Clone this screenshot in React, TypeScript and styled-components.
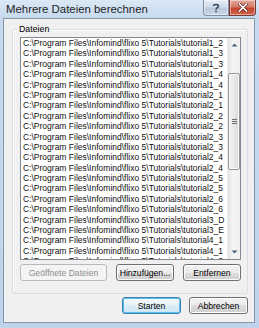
import React from "react";
import styled, { createGlobalStyle } from "styled-components";

const Global = createGlobalStyle`
  html, body { margin: 0; padding: 0; background: #c4d8ee; }
  * { box-sizing: border-box; }
`;

const Frame = styled.div`
  width: 259px;
  height: 328px;
  display: flex;
  flex-direction: column;
  background: linear-gradient(180deg, #dbe8f5 0px, #c6d9ee 18px, #bfd4ec 100%);
  font-family: "Liberation Sans", Arial, sans-serif;
  overflow: hidden;
`;

const TitleBar = styled.div`
  height: 18px;
  display: flex;
  align-items: flex-start;
  padding-left: 6px;
  padding-right: 3px;
`;

const TitleText = styled.div`
  flex: 1;
  font-family: "Liberation Sans", Arial, sans-serif;
  font-size: 11.4px;
  line-height: 13px;
  padding-top: 3px;
  color: #1e1e1e;
`;

const CaptionButtons = styled.div`
  display: flex;
`;

const CaptionButton = styled.div<{ $close?: boolean }>`
  width: ${(p) => (p.$close ? 27 : 26)}px;
  height: 16px;
  display: flex;
  align-items: center;
  justify-content: center;
  border: 1px solid ${(p) => (p.$close ? "#7a3a34" : "#7e8ea3")};
  border-top: none;
  border-radius: ${(p) => (p.$close ? "0 0 4px 0" : "0 0 0 4px")};
  background: ${(p) =>
    p.$close
      ? "linear-gradient(180deg, #e4a99a 0%, #d47c68 45%, #c2452d 55%, #d0634b 100%)"
      : "linear-gradient(180deg, #e6eef7 0%, #d1dcea 45%, #b9c9dc 55%, #c9d7e7 100%)"};
  box-shadow: inset 0 0 0 1px rgba(255, 255, 255, 0.45);
`;

const Client = styled.div`
  flex: 1;
  margin: 0 4px 5px 3px;
  border: 1px solid #8596aa;
  background: #f0f0f0;
  display: flex;
  flex-direction: column;
`;

const GroupBox = styled.div`
  position: relative;
  margin: 10px 6px 0 8px;
  height: 265px;
  border: 1px solid #d5dfe5;
  border-radius: 3px;
  padding: 7px 6px 0 7px;
  display: flex;
  flex-direction: column;
  box-shadow: 1px 1px 0 #ffffff inset;
`;

const Legend = styled.div`
  position: absolute;
  top: -6px;
  left: 5px;
  padding: 0 1px;
  background: #f0f0f0;
  font-size: 8.8px;
  line-height: 10px;
  color: #000;
`;

const ListBox = styled.div`
  height: 223px;
  border: 1px solid #828790;
  background: #ffffff;
  display: flex;
  overflow: hidden;
`;

const Items = styled.div`
  flex: 1;
  min-width: 0;
  overflow: hidden;
  padding-left: 2px;
`;

const Item = styled.div`
  height: 10.4px;
  line-height: 10.4px;
  font-size: 8.5px;
  white-space: nowrap;
  color: #111;
`;

const ScrollBar = styled.div`
  width: 13px;
  flex: none;
  display: flex;
  flex-direction: column;
  background: linear-gradient(90deg, #e3e3e3 0%, #f5f5f5 40%, #f0f0f0 100%);
  border-left: 1px solid #ececec;
`;

const Arrow = styled.div`
  height: 13px;
  display: flex;
  align-items: center;
  justify-content: center;
`;

const Track = styled.div<{ $h: number }>`
  height: ${(p) => p.$h}px;
`;

const Thumb = styled.div`
  height: 97px;
  border: 1px solid #979797;
  border-radius: 2px;
  background: linear-gradient(90deg, #f3f3f3 0%, #e8e8e8 50%, #d9d9d9 100%);
  box-shadow: inset 0 0 0 1px #fafafa;
  display: flex;
  align-items: center;
  justify-content: center;
`;

const Grip = styled.div`
  width: 5px;
  height: 5px;
  background: repeating-linear-gradient(180deg, #6e6e6e 0 1px, transparent 1px 2px);
`;

const ButtonRow = styled.div<{ $end?: boolean }>`
  display: flex;
  gap: 9px;
  justify-content: ${(p) => (p.$end ? "flex-end" : "flex-start")};
`;

const GroupButtons = styled(ButtonRow)`
  margin-top: 4px;
`;

const BottomButtons = styled(ButtonRow)`
  margin: 3px 6px 0 0;
  gap: 8px;
`;

const Button = styled.div<{ $w: number; $disabled?: boolean; $default?: boolean }>`
  width: ${(p) => p.$w}px;
  height: 17px;
  display: flex;
  align-items: center;
  justify-content: center;
  font-size: 8.6px;
  border-radius: 3px;
  color: ${(p) => (p.$disabled ? "#8d8d8d" : "#000")};
  border: 1px solid
    ${(p) => (p.$disabled ? "#b7babc" : p.$default ? "#3c7fb1" : "#707070")};
  background: ${(p) =>
    p.$disabled
      ? "#f4f4f4"
      : p.$default
      ? "linear-gradient(180deg, #f2f8fc 0%, #eaf3fa 50%, #dbecf7 50%, #cfe6f5 100%)"
      : "linear-gradient(180deg, #f2f2f2 0%, #ebebeb 50%, #dddddd 50%, #cfcfcf 100%)"};
  box-shadow: ${(p) =>
    p.$default
      ? "inset 0 0 0 1px #5cc0ee"
      : p.$disabled
      ? "none"
      : "inset 0 0 0 1px #fcfcfc"};
`;

const files = [
  "1_2", "1_3", "1_3", "1_4", "1_4", "2_1", "2_1", "2_2", "2_2", "2_3", "2_3",
  "2_4", "2_4", "2_5", "2_5", "2_6", "2_6", "3_D", "3_E", "4_1", "4_1", "4_2",
];

const HelpGlyph = () => (
  <svg width="8" height="10" viewBox="0 0 8 10">
    <path d="M1.5 3 C1.5 1 6.5 1 6.5 3 C6.5 4.6 4 4.6 4 6.5" fill="none" stroke="#3d4a5c" strokeWidth="1.6" />
    <rect x="3.2" y="7.6" width="1.6" height="1.6" fill="#3d4a5c" />
  </svg>
);

const CloseGlyph = () => (
  <svg width="10" height="9" viewBox="0 0 10 9">
    <path d="M1.5 1 L8.5 8 M8.5 1 L1.5 8" stroke="#5a1c14" strokeWidth="3" strokeLinecap="square" />
    <path d="M1.5 1 L8.5 8 M8.5 1 L1.5 8" stroke="#ffffff" strokeWidth="1.7" strokeLinecap="square" />
  </svg>
);

const UpArrow = () => (
  <svg width="7" height="4" viewBox="0 0 7 4">
    <path d="M0.5 3.5 L3.5 0.5 L6.5 3.5 Z" fill="#4d6185" />
  </svg>
);

const DownArrow = () => (
  <svg width="7" height="4" viewBox="0 0 7 4">
    <path d="M0.5 0.5 L3.5 3.5 L6.5 0.5 Z" fill="#4d6185" />
  </svg>
);

export default function App() {
  return (
    <>
      <Global />
      <Frame>
        <TitleBar>
          <TitleText>Mehrere Dateien berechnen</TitleText>
          <CaptionButtons>
            <CaptionButton>
              <HelpGlyph />
            </CaptionButton>
            <CaptionButton $close>
              <CloseGlyph />
            </CaptionButton>
          </CaptionButtons>
        </TitleBar>
        <Client>
          <GroupBox>
            <Legend>Dateien</Legend>
            <ListBox>
              <Items>
                {files.map((f, i) => (
                  <Item key={i}>{`C:\\Program Files\\Infomind\\flixo 5\\Tutorials\\tutorial${f}`}</Item>
                ))}
              </Items>
              <ScrollBar>
                <Arrow>
                  <UpArrow />
                </Arrow>
                <Track $h={22} />
                <Thumb>
                  <Grip />
                </Thumb>
                <Track $h={75} />
                <Arrow>
                  <DownArrow />
                </Arrow>
              </ScrollBar>
            </ListBox>
            <GroupButtons>
              <Button $w={87} $disabled>
                Geöffnete Dateien
              </Button>
              <Button $w={58}>Hinzufügen...</Button>
              <Button $w={58}>Entfernen</Button>
            </GroupButtons>
          </GroupBox>
          <BottomButtons $end>
            <Button $w={59} $default>
              Starten
            </Button>
            <Button $w={59}>Abbrechen</Button>
          </BottomButtons>
        </Client>
      </Frame>
    </>
  );
}
